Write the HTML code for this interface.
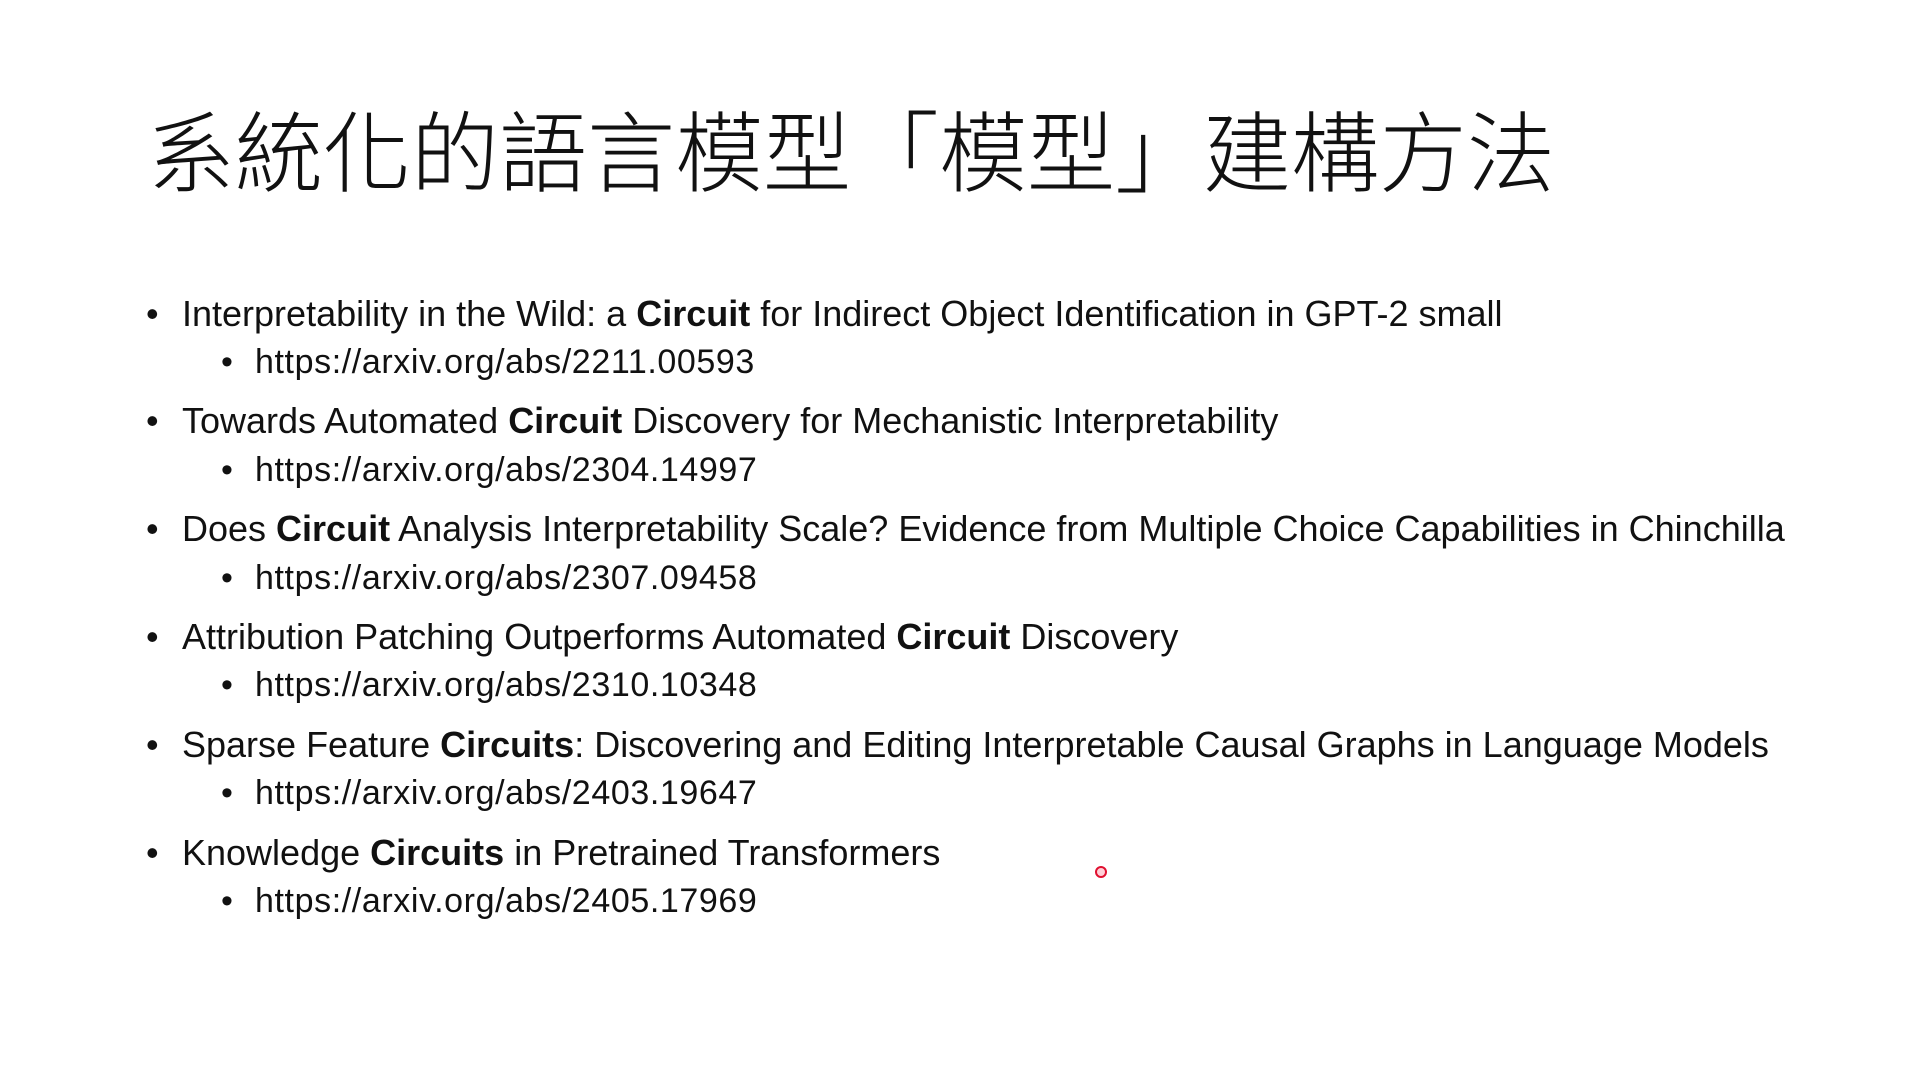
<!DOCTYPE html>
<html><head><meta charset="utf-8"><style>
html,body{margin:0;padding:0;background:#fff;}
body{width:1920px;height:1080px;position:relative;overflow:hidden;font-family:"Liberation Sans","Noto Sans CJK TC",sans-serif;color:#111;}
.t{position:absolute;left:147px;top:104px;font-size:88px;font-family:"Noto Sans CJK TC","Noto Sans CJK SC",sans-serif;font-weight:300;letter-spacing:0px;white-space:nowrap;line-height:1;}
.l{position:absolute;white-space:nowrap;line-height:1;}
.a{left:182px;font-size:36px;}
.b{left:255px;font-size:34px;letter-spacing:0.6px;}
.a:before{content:"•";position:absolute;left:-36px;}
.b:before{content:"•";position:absolute;left:-34px;}
.dot{position:absolute;left:1095px;top:866px;width:8px;height:8px;border:2px solid #e01030;border-radius:50%;background:#ffd0d8;}
</style></head><body>
<div class="t">系統化的語言模型「模型」建構方法</div>
<div class="l a" style="top:296px">Interpretability in the Wild: a <b>Circuit</b> for Indirect Object Identification in GPT-2 small</div>
<div class="l b" style="top:345px">https://arxiv.org/abs/2211.00593</div>
<div class="l a" style="top:403px">Towards Automated <b>Circuit</b> Discovery for Mechanistic Interpretability</div>
<div class="l b" style="top:453px">https://arxiv.org/abs/2304.14997</div>
<div class="l a" style="top:511px">Does <b>Circuit</b> Analysis Interpretability Scale? Evidence from Multiple Choice Capabilities in Chinchilla</div>
<div class="l b" style="top:561px">https://arxiv.org/abs/2307.09458</div>
<div class="l a" style="top:619px">Attribution Patching Outperforms Automated <b>Circuit</b> Discovery</div>
<div class="l b" style="top:668px">https://arxiv.org/abs/2310.10348</div>
<div class="l a" style="top:727px">Sparse Feature <b>Circuits</b>: Discovering and Editing Interpretable Causal Graphs in Language Models</div>
<div class="l b" style="top:776px">https://arxiv.org/abs/2403.19647</div>
<div class="l a" style="top:835px">Knowledge <b>Circuits</b> in Pretrained Transformers</div>
<div class="l b" style="top:884px">https://arxiv.org/abs/2405.17969</div>
<div class="dot"></div>
</body></html>
